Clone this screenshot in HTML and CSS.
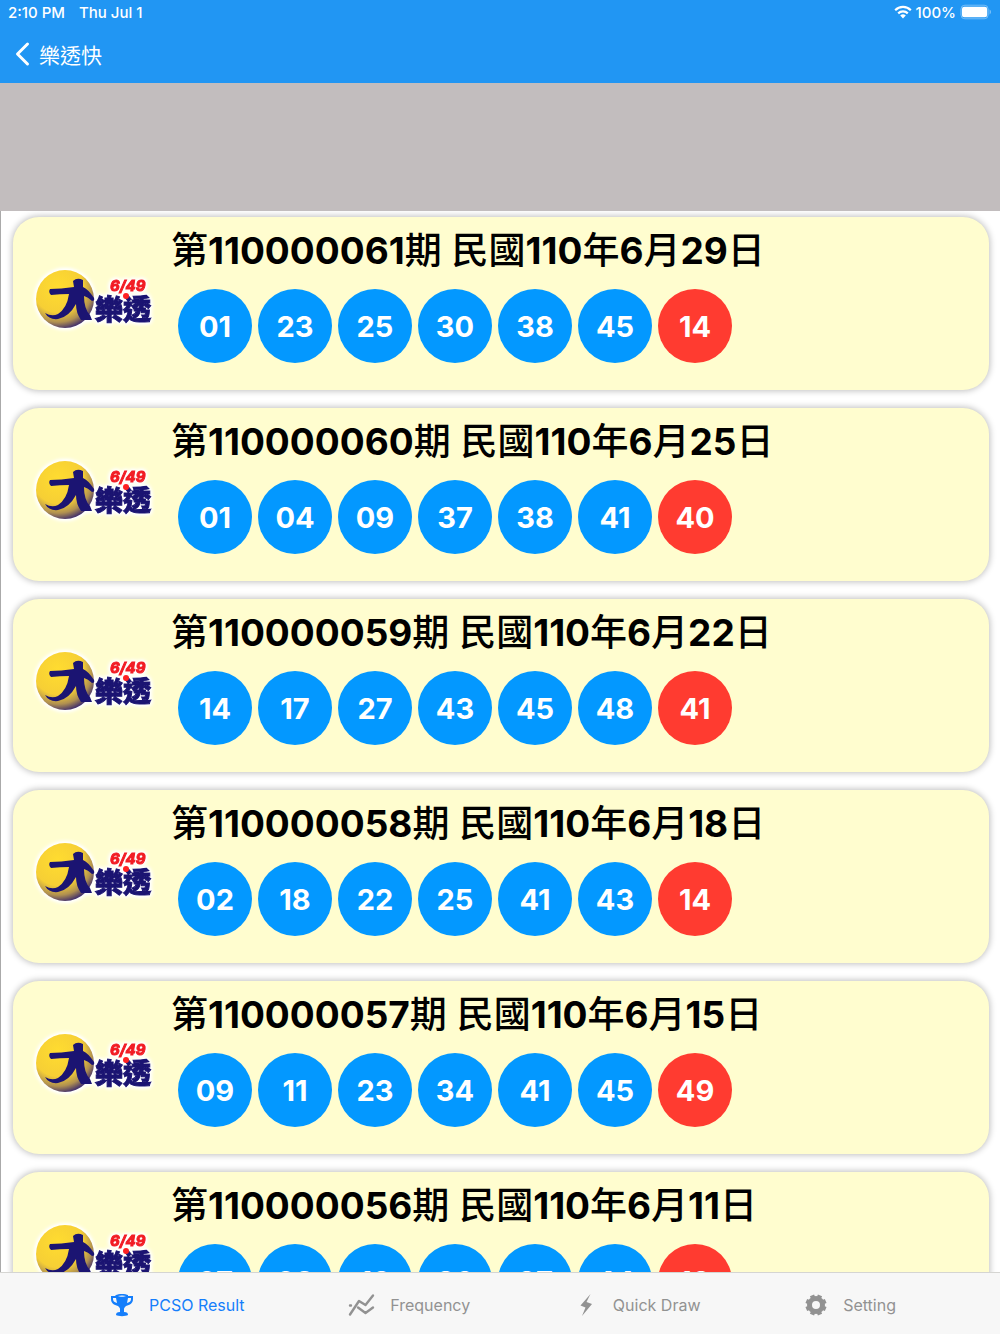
FILE: index.html
```html
<!DOCTYPE html>
<html lang="zh-Hant">
<head>
<meta charset="utf-8">
<meta name="viewport" content="width=device-width, initial-scale=1">
<title>樂透快</title>
<link rel="stylesheet" href="styles.css">
</head>
<body>
<header class="header">
  <div class="status">
    <span>2:10 PM</span>
    <span>Thu Jul 1</span>
    <span class="status-right">
      <svg class="wifi" viewBox="0 0 18 14" aria-hidden="true"><g fill="none" stroke="currentColor" stroke-width="2.2"><path d="M1.2 5.2a11 11 0 0 1 15.6 0"/><path d="M4.2 8.4a6.8 6.8 0 0 1 9.6 0"/></g><path d="M9 13.5 6.2 10.6a4 4 0 0 1 5.6 0z" fill="currentColor"/></svg>
      <span>100%</span>
      <svg class="battery" viewBox="0 0 33 16" aria-hidden="true"><rect x="1" y="1" width="28" height="14" rx="4" fill="none" stroke="#fff" stroke-opacity=".4"/><rect x="2" y="2.500" width="26" height="11" rx="2.500" fill="#fff"/><path d="M30.500 5.500c2 .8 2 4.200 0 5z" fill="#fff" fill-opacity=".4"/></svg>
    </span>
  </div>
  <nav class="navbar">
    <button class="back" type="button">
      <svg viewBox="0 0 16 26" aria-hidden="true"><path d="M13 3 3 13l10 10" fill="none" stroke="currentColor" stroke-width="3" stroke-linecap="round" stroke-linejoin="round"/></svg>
      樂透快
    </button>
  </nav>
</header>
<div class="banner"></div>

<svg class="defs" aria-hidden="true">
  <defs>
    <radialGradient id="ball" cx=".38" cy=".3" r=".75">
      <stop offset="0" stop-color="#ffdc30"/><stop offset=".58" stop-color="#f6cf35"/><stop offset=".8" stop-color="#b09050"/><stop offset="1" stop-color="#2c1c70"/>
    </radialGradient>
    <symbol id="logo" viewBox="0 0 124 72">
      <circle cx="34" cy="36" r="29" fill="url(#ball)"/>
      <path d="M19 26q11 0 24-2l-1-6q4-4 10-1v7q5 2 11 11 1 3-2 3-4-4-8-5 0 13 6 19l2 5H50q-5-7-5-16-7 13-18 15-9 1-13-6 7 4 13 1 9-6 11-20-9 0-18 1-3-3-1-6z" fill="#1b1472"/>
      <text class="logo-name" x="64" y="57">樂透</text>
      <text class="logo-game" x="79" y="28">6/49</text>
      <circle cx="95" cy="33" r="3" fill="#f22"/>
    </symbol>
  </defs>
</svg>

<main class="results" id="results"></main>

<nav class="tabs">
  <a class="tab active" href="#results">
    <svg viewBox="0 0 24 24" aria-hidden="true"><path fill="currentColor" fill-rule="evenodd" d="M6 2c2-1.500 10-1.500 12 0v1h5v3c0 4-3 6-7 7-1 1-2 2-2 3v3c3 0 4 1 4 3-2 1.500-10 1.500-12 0 0-2 1-3 4-3v-3c0-1-1-2-2-3-4-1-7-3-7-7V3h4zM3 5v1c0 2 1 3 4 4L6 5zm18 0h-3l-1 5c3-1 4-2 4-4zM8 3c1 1 7 1 8 0-2-.8-6-.8-8 0z"/></svg>
    PCSO Result</a>
  <a class="tab" href="#frequency">
    <svg class="wide" viewBox="0 0 27 24" aria-hidden="true"><g fill="none" stroke="currentColor" stroke-width="2.400" stroke-linecap="round" stroke-linejoin="round"><path d="M2 21.500 11 8l6.500 4L25 2.500"/><path d="M2 12.500h1M10 14.500l7.500 5.500 7.500-5.500"/></g></svg>
    Frequency</a>
  <a class="tab" href="#draw">
    <svg viewBox="0 0 24 24" aria-hidden="true"><path fill="currentColor" d="M16.500 1 6.500 12.500l5 2L8 23l10-12-5.500-2z"/></svg>
    Quick Draw</a>
  <a class="tab" href="#setting">
    <svg viewBox="0 0 24 24" aria-hidden="true"><circle cx="12" cy="12" r="6.500" fill="none" stroke="currentColor" stroke-width="5"/><g stroke="currentColor" stroke-width="4.500"><path d="M8 2.300 16 21.700M16 2.300 8 21.700M2.300 8l19.400 8M2.300 16l19.400-8" stroke-dasharray="4 13 4"/></g></svg>
    Setting</a>
</nav>
<script src="app.js"></script>
</body>
</html>
```
FILE: styles.css
```css
* { box-sizing: border-box; }

body {
  margin: 0;
  height: 100vh;
  display: flex;
  flex-direction: column;
  background: #fff;
  font-family: Inter, "Noto Sans CJK TC", sans-serif;
}

.header { flex: none; background: #2196f3; color: #fff; }

.status {
  display: flex;
  align-items: center;
  gap: 14px;
  height: 24px;
  padding: 0 8px;
  font-size: 15px;
  font-weight: 500;
}
.status-right { display: flex; align-items: center; gap: 4px; margin-left: auto; }
.wifi { width: 18px; height: 14px; }
.battery { width: 32px; height: 16px; }

.navbar { display: flex; align-items: center; height: 59px; padding: 0 14px; }
.back {
  display: flex;
  align-items: center;
  gap: 8px;
  padding: 0;
  border: 0;
  background: none;
  color: inherit;
  font: 400 21px/30px "Noto Sans CJK TC", sans-serif;
}
.back svg { width: 17px; height: 26px; }

.banner { flex: none; height: 128px; background: #c2bdbe; }
.defs { position: absolute; width: 0; height: 0; }

.results {
  flex: 1;
  min-height: 0;
  overflow: auto;
  scrollbar-width: none;
  display: flex;
  flex-direction: column;
  gap: 18px;
  padding: 6px 11px 18px 12px;
  border-left: 1px solid #aaa;
}
.card {
  flex: none;
  display: flex;
  gap: 16px;
  min-height: 173px;
  padding: 8px 18px 18px;
  border-radius: 26px;
  background: #fffdcf;
  box-shadow: 0 0 6px 1px rgba(0, 0, 0, .25);
}
.logo {
  flex: none;
  align-self: center;
  width: 124px;
  height: 72px;
  filter: drop-shadow(0 0 2px #fff) drop-shadow(0 0 1px #fff) drop-shadow(0 0 1px #fff);
}
.logo-name { font: 900 28px "Noto Sans CJK TC", sans-serif; fill: #1b1472; stroke: #1b1472; }
.logo-game { font: italic 700 15px Inter, sans-serif; fill: #f21c24; stroke: #f21c24; }

.title { margin: 0; font-size: 37px; line-height: 52px; font-weight: 500; white-space: pre; }
.title b { font-weight: 700; }
.balls { display: flex; gap: 6px; margin: 12px 0 0; padding: 0 0 0 7px; list-style: none; }
.ball {
  display: grid;
  place-items: center;
  width: 74px;
  height: 74px;
  border-radius: 50%;
  background: #0398ff;
  color: #fff;
  font-size: 29px;
  font-weight: 700;
}
.ball:last-child { background: #ff3b30; }

.tabs {
  flex: none;
  display: flex;
  justify-content: space-between;
  height: 62px;
  padding: 0 104px 0 110px;
  border-top: 1px solid #d5d5d2;
  background: #f7f7f7;
}
.tab {
  display: flex;
  align-items: center;
  gap: 15px;
  padding-top: 3px;
  color: #929292;
  font-size: 16px;
  text-decoration: none;
}
.tab svg { width: 24px; height: 24px; }
.tab .wide { width: 27px; }
.tab.active { color: #157efb; }
```
FILE: app.js
```js
const draws = [
  ["110000061", "6", "29", "01 23 25 30 38 45 14"],
  ["110000060", "6", "25", "01 04 09 37 38 41 40"],
  ["110000059", "6", "22", "14 17 27 43 45 48 41"],
  ["110000058", "6", "18", "02 18 22 25 41 43 14"],
  ["110000057", "6", "15", "09 11 23 34 41 45 49"],
  ["110000056", "6", "11", "07 09 13 26 37 44 18"]
];

document.getElementById("results").innerHTML = draws.map(([issue, month, day, numbers]) => `
  <article class="card">
    <svg class="logo" role="img" aria-label="大樂透 6/49"><use href="#logo"/></svg>
    <div>
      <h2 class="title">第<b>${issue}</b>期 民國<b>110</b>年<b>${month}</b>月<b>${day}</b>日</h2>
      <ol class="balls">${numbers.split(" ").map(n => `<li class="ball">${n}</li>`).join("")}</ol>
    </div>
  </article>`).join("");
```
